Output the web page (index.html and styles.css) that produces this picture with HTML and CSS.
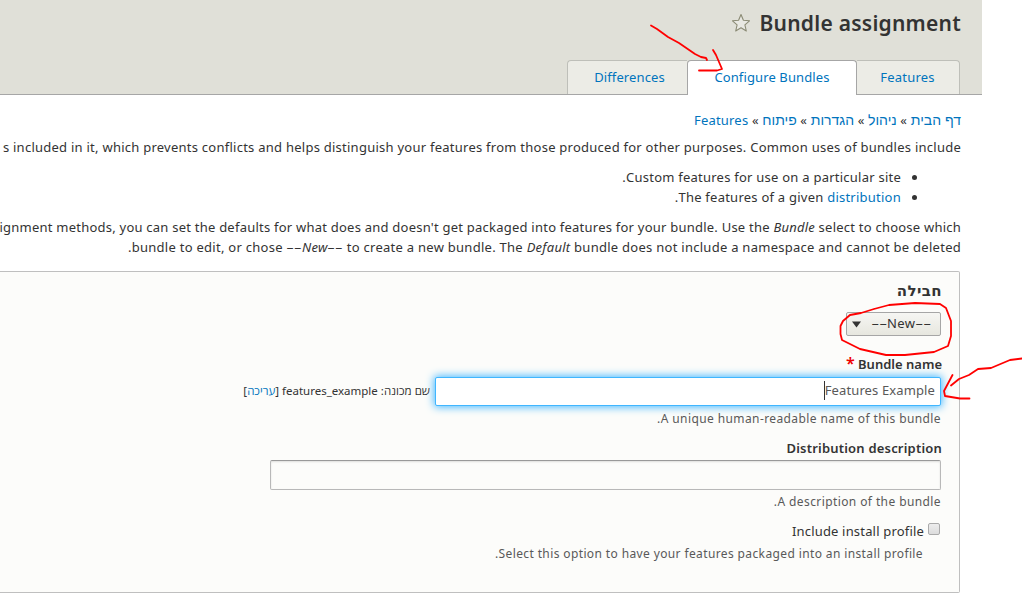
FILE: index.html
```html
<!DOCTYPE html>
<html lang="he">
<head>
<meta charset="utf-8">
<title>Bundle assignment</title>
<link rel="stylesheet" href="styles.css">
</head>
<body>
<div class="page" dir="rtl">
  <header class="header">
    <div class="title-row">
      <h1 class="title">Bundle assignment</h1>
      <svg class="star" width="20" height="20" viewBox="0 0 20 20"><path d="M10 1.5L12.4 7.3L18.5 7.8L13.9 11.8L15.3 18L10 14.7L4.7 18L6.1 11.8L1.5 7.8L7.6 7.3Z"/></svg>
    </div>
    <nav class="tabs">
      <a class="tab tab-features"><span>Features</span></a>
      <a class="tab tab-bundles active"><span>Configure Bundles</span></a>
      <a class="tab tab-differences"><span>Differences</span></a>
    </nav>
  </header>
  <main class="content">
    <nav class="breadcrumb"><a class="he">דף הבית</a> » <a class="he">ניהול</a> » <a class="he">הגדרות</a> » <a class="he">פיתוח</a> » <a>Features</a></nav>
    <p class="text intro">s included in it, which prevents conflicts and helps distinguish your features from those produced for other purposes. Common uses of bundles include</p>
    <ul class="list">
      <li><span>Custom features for use on a particular site.</span></li>
      <li><span>The features of a given <a>distribution</a>.</span></li>
    </ul>
    <p class="text methods">ignment methods, you can set the defaults for what does and doesn't get packaged into features for your bundle. Use the <em>Bundle</em> select to choose which</p>
    <p class="text second">bundle to edit, or chose <em><span class="dash">--</span>New<span class="dash">--</span></em> to create a new bundle. The <em>Default</em> bundle does not include a namespace and cannot be deleted.</p>
    <section class="panel">
      <div class="label label-he">חבילה</div>
      <div class="select"><span class="select-text" dir="ltr"><span class="dash">--</span>New<span class="dash">--</span></span><svg width="9" height="7" viewBox="0 0 9 7"><path d="M0 0.5H9L4.5 6.5Z" fill="#333"/></svg></div>
      <div class="label label-name">Bundle name <span class="required">*</span></div>
      <div class="name-row">
        <div class="input focused"><span class="value">Features Example</span><i class="caret"></i></div>
        <div class="machine">שם מכונה: features_example [<a>עריכה</a>]</div>
      </div>
      <div class="desc desc-name">A unique human-readable name of this bundle.</div>
      <div class="label label-dist">Distribution description</div>
      <div class="input wide"></div>
      <div class="desc desc-dist">A description of the bundle.</div>
      <div class="check-row"><i class="checkbox"></i><span class="check-label">Include install profile</span></div>
      <div class="desc desc-check">Select this option to have your features packaged into an install profile.</div>
    </section>
  </main>
</div>
<svg class="marks" width="1022" height="596" viewBox="0 0 1022 596">
  <path d="M651 25.500L657 29L668 37L679 43L695 54L701 57L706 58L707 60M713 50L716 55L722 69L717 70.500H699"/>
  <path d="M874 309L889 305L915 303L940 304L946 308L951 321V336L948 346L934 352L905 355H886L860 349L842 340L840.500 334V326L843 321L850 315L861 313L874 309"/>
  <path d="M1022 358.500L1010 360L991 368L978 369L969 375L959 379L951 385.500M952.500 375L944 391L945 396L960 398.500L969.500 398.500"/>
</svg>
</body>
</html>
```
FILE: styles.css
```css
* { box-sizing: border-box; }
body {
  margin: 0;
  width: 1022px;
  height: 596px;
  overflow: hidden;
  position: relative;
  background: #fff;
  color: #333;
  font: 13px/20px "Noto Sans", "Open Sans", "DejaVu Sans", sans-serif;
}
a { color: #0074bd; text-decoration: none; }
.page { width: 982px; height: 596px; overflow: hidden; }
.header {
  height: 95px;
  background: #e0e0d8;
  border-bottom: 1px solid #a6a6a6;
  padding-right: 22px;
}
.title-row { display: flex; align-items: center; height: 60px; padding-bottom: 14px; }
.title { margin: 0 -1px 0 0; font-size: 21px; font-weight: 600; letter-spacing: 0.25px; line-height: 28px; white-space: nowrap; }
.star { margin-right: 8px; }
.star path { fill: #e8e8e2; stroke: #8b8b75; stroke-width: 1.1; stroke-linejoin: round; }
.tabs { display: flex; }
.tab {
  height: 34px;
  display: flex;
  align-items: center;
  justify-content: center;
  padding-bottom: 2px;
  background: #ecece6;
  border: 1px solid #bebfb9;
  border-bottom: 0;
  letter-spacing: 0.12px;
  white-space: nowrap;
}
.tab-features { width: 103px; padding-right: 1px; border-left: 0; border-top-right-radius: 4px; letter-spacing: 0.2px; }
.tab-bundles { width: 170px; }
.tab-differences { width: 120px; padding-left: 4px; border-right: 0; border-top-left-radius: 4px; }
.tab.active { height: 35px; padding-bottom: 3px; background: #fff; border-color: #a6a6a6; border-radius: 4px 4px 0 0; }
.content { padding: 15px 21px 0 0; white-space: nowrap; }
.breadcrumb { height: 20px; letter-spacing: 0.2px; }
.he { font-family: "Liberation Sans", sans-serif; font-size: 14px; letter-spacing: 0; }
.text { margin: 0; letter-spacing: 0.25px; }
.intro { margin-top: 7px; }
.methods { letter-spacing: 0.23px; }
.second { letter-spacing: 0.27px; }
.dash { display: inline-block; margin: 0 3.7px; transform: scaleX(1.9); letter-spacing: 0; }
.list { margin: 10px 0; padding: 0 60px 0 0; list-style: none; letter-spacing: 0.24px; }
.list li { display: flex; position: relative; }
.list li::before { content: ""; position: absolute; right: -16px; top: 8px; width: 5px; height: 5px; border-radius: 50%; background: #333; }
.panel {
  margin: 14px 1px 0 0;
  height: 322px;
  padding: 9px 18px 0 0;
  background: #fcfcfa;
  border: 1px solid #bfbfbf;
  border-left: 0;
  border-radius: 0 2px 2px 0;
}
.label { height: 20px; margin-right: -1px; font-weight: 600; }
.label-he { font-family: "DejaVu Sans", sans-serif; font-size: 15px; font-weight: 700; letter-spacing: 0.4px; }
.select {
  display: flex;
  align-items: center;
  justify-content: space-between;
  width: 95px;
  height: 24px;
  margin-top: 11px;
  padding: 0 9px 2px 5px;
  border: 1px solid #a6a6a6;
  border-radius: 2px;
  background: linear-gradient(#f6f6f3, #e7e7df);
}
.select svg { margin-top: 3px; }
.select-text { letter-spacing: 0.4px; }
.label-name { margin-top: 18px; }
.required { color: #e00; font-size: 16px; line-height: 18px; }
.name-row { display: flex; align-items: center; margin-top: 3px; }
.input { height: 30px; border: 1px solid #b8b8b8; border-top-color: #999; border-radius: 2px; background: #fcfcfa; box-shadow: inset 0 1px 2px rgba(0,0,0,.12); }
.input.focused { display: flex; align-items: center; width: 506px; height: 29px; padding: 0 5px 2px 0; background: #fff; border-color: #40b6ff; box-shadow: 0 0 8px 1px #40b6ff; color: #595959; letter-spacing: 0.12px; }
.caret { width: 1px; height: 19px; background: #333; }
.value { margin-top: -1px; }
.wide { width: 671px; margin-top: 2px; }
.machine { margin-right: 5px; padding-bottom: 1px; font-size: 11.5px; }
.desc { height: 20px; font-size: 12px; color: #595959; letter-spacing: 0.4px; }
.desc-name { margin-top: 3px; }
.label-dist { margin-top: 9px; letter-spacing: 0.2px; }
.desc-dist { margin-top: 2px; }
.check-row { display: flex; height: 20px; margin-top: 9px; letter-spacing: 0.18px; }
.checkbox { width: 12px; height: 12px; margin: 2px 1px 0 4px; border: 1px solid #aaa; border-radius: 2px; background: linear-gradient(#ededed, #dcdcdc); }
.desc-check { padding-right: 18px; margin-top: 3px; letter-spacing: 0.38px; }
.marks { position: absolute; left: 0; top: 0; }
.marks path { fill: none; stroke: #f00; stroke-width: 1.8; stroke-linecap: round; stroke-linejoin: round; }
```
